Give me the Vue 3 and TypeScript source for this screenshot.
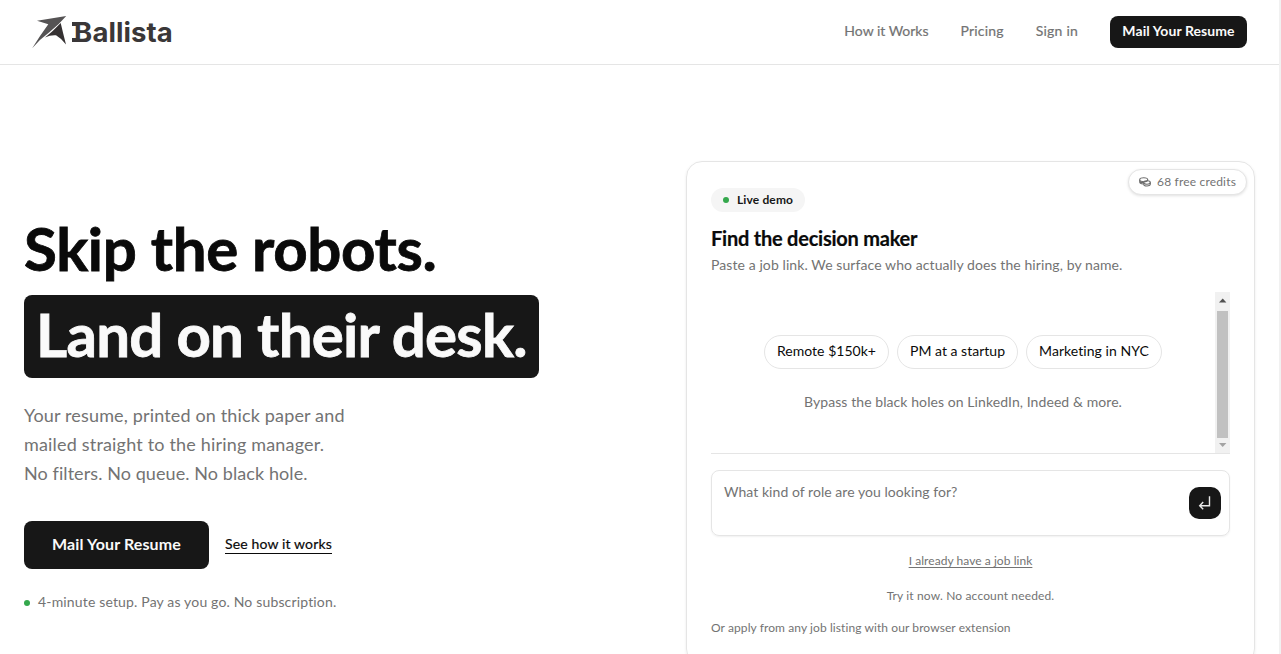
<script setup lang="ts">
const links: { label: string; cls: string }[] = [
  { label: 'How it Works', cls: 'how' },
  { label: 'Pricing', cls: 'pricing' },
  { label: 'Sign in', cls: 'signin' },
]
const chips: { label: string; cls: string }[] = [
  { label: 'Remote $150k+', cls: 'c1' },
  { label: 'PM at a startup', cls: 'c2' },
  { label: 'Marketing in NYC', cls: 'c3' },
]
</script>

<template>
  <div class="page">
    <header class="header">
      <a class="logo">
        <svg class="mark" width="36" height="34" viewBox="0 0 36 34">
          <path d="M34.2 1 5 5.800 16.300 9.200Q8 20.500 .2 33.200 7.500 24.600 17 17.600 27 9.600 34.200 1Z" fill="#555354" />
          <path d="M28.700 8Q21.500 15.800 13 22.500 18.500 19.800 24 20.300 29.500 23.500 34 29.500 31 18 28.700 8Z" fill="#353132" />
        </svg>
        <span class="wordmark"><span class="slab">B</span><span class="rest">allista</span></span>
      </a>
      <nav class="nav">
        <a v-for="l in links" :key="l.label" :class="l.cls">{{ l.label }}</a>
        <button class="cta-small">Mail Your Resume</button>
      </nav>
    </header>

    <main class="main">
      <section class="hero">
        <h1>
          <span class="line">Skip the robots.</span>
          <span class="pill">Land on their desk.</span>
        </h1>
        <p class="lead">
          <span class="l1">Your resume, printed on thick paper and</span>
          <span class="l2">mailed straight to the hiring manager.</span>
          <span class="l3">No filters. No queue. No black hole.</span>
        </p>
        <div class="actions">
          <button class="cta">Mail Your Resume</button>
          <a class="see">See how it works</a>
        </div>
        <p class="note"><i class="dot"></i><span>4-minute setup. Pay as you go. No subscription.</span></p>
      </section>

      <section class="card">
        <div class="credits">
          <svg width="12" height="10" viewBox="0 0 12 10" fill="none" stroke="#6c6c6c" stroke-width="1.100">
            <ellipse cx="4.700" cy="2.700" rx="4" ry="2" />
            <path d="M.7 2.700v2.300c0 1.100 1.700 1.900 3.500 2M8.700 2.700v1M.9 4.500c1 .9 2.700 1.100 4 1" />
            <ellipse cx="8" cy="5.500" rx="3.300" ry="1.700" />
            <path d="M4.700 5.500v1.800c0 2.300 6.600 2.300 6.600 0V5.500" />
          </svg>
          <span>68 free credits</span>
        </div>
        <div class="badge"><i class="dot"></i><span>Live demo</span></div>
        <h2>Find the decision maker</h2>
        <p class="desc">Paste a job link. We surface who actually does the hiring, by name.</p>

        <div class="scroller">
          <div class="suggest">
            <div class="chips">
              <button v-for="c in chips" :key="c.label" class="chip" :class="c.cls">{{ c.label }}</button>
            </div>
            <p class="bypass">Bypass the black holes on LinkedIn, Indeed &amp; more.</p>
          </div>
          <div class="bar">
            <svg width="15" height="19" viewBox="0 0 15 19"><path d="M4 10.500h7.400L7.700 6.500Z" fill="#505050" /></svg>
            <div class="thumb"></div>
            <svg width="15" height="15" viewBox="0 0 15 15"><path d="M4 5h7.400L7.700 9Z" fill="#a3a3a3" /></svg>
          </div>
        </div>

        <div class="prompt">
          <span class="placeholder">What kind of role are you looking for?</span>
          <button class="send" aria-label="Send">
            <svg width="16" height="16" viewBox="0 0 16 16" fill="none" stroke="#e8e8e8" stroke-width="1.400">
              <path d="M12.500 1.200V10.700H2.800M6.200 7.100 2.700 10.700l3.500 3.600" />
            </svg>
          </button>
        </div>

        <a class="joblink">I already have a job link</a>
        <p class="try">Try it now. No account needed.</p>
        <p class="ext">Or apply from any job listing with our browser extension</p>
      </section>
    </main>
  </div>
</template>

<style>
body {
  margin: 0;
  background: #fff;
}
</style>

<style scoped>
.page {
  box-sizing: border-box;
  width: 1281px;
  height: 654px;
  overflow: hidden;
  border-right: 2px solid #f1f1f1;
  font-family: Lato, 'Open Sans', sans-serif;
  font-size: 14px;
  line-height: 20px;
  color: #0a0a0a;
}
p, h1, h2 { margin: 0; }
button { font: inherit; border: 0; padding: 0; box-sizing: border-box; white-space: nowrap; }

.header {
  box-sizing: border-box;
  height: 65px;
  padding: 0 32px;
  border-bottom: 1px solid #e5e5e5;
  display: flex;
  align-items: center;
  justify-content: space-between;
}
.logo { display: flex; align-items: center; color: #3a3738; }
.mark { margin-right: 6px; }
.wordmark {
  display: flex;
  height: 32px;
  padding-top: 1px;
  box-sizing: border-box;
  line-height: 30px;
  font-family: Inter, sans-serif;
  font-size: 27.500px;
  font-weight: 700;
}
.slab { position: relative; width: 18.500px; }
/* slab serifs on the stem of the initial */
.slab::before,
.slab::after {
  content: '';
  position: absolute;
  left: -2px;
  width: 6px;
  height: 4px;
  background: #3a3738;
}
.slab::before { top: 5px; }
.slab::after { top: 21px; }
.rest { letter-spacing: 0.050px; }
.nav { display: flex; align-items: center; color: #737373; }
.nav a { margin-right: 32px; padding-bottom: 2px; -webkit-text-stroke: 0.200px #737373; white-space: nowrap; }
.how { letter-spacing: -0.010px; }
.pricing { letter-spacing: 0.190px; }
.signin { letter-spacing: 0.220px; }
.cta-small {
  width: 137px;
  height: 32px;
  padding-bottom: 2px;
  border-radius: 8px;
  background: #171717;
  color: #fafafa;
  font-weight: 700;
  letter-spacing: 0.080px;
}

.main { display: flex; justify-content: space-between; padding: 96px 24px 0; }
.hero { padding-top: 51px; }
h1 {
  display: flex;
  flex-direction: column;
  align-items: flex-start;
  gap: 11px;
  font-size: 60px;
  font-weight: 700;
  line-height: 72px;
  white-space: nowrap;
}
.line { letter-spacing: -0.350px; -webkit-text-stroke: 0.800px #0a0a0a; }
.pill {
  box-sizing: border-box;
  width: 515px;
  height: 83px;
  padding: 3px 12px 8px;
  border-radius: 8px;
  background: #171717;
  color: #fafafa;
  letter-spacing: -0.740px;
  -webkit-text-stroke: 0.800px #fafafa;
}
.lead { margin-top: 23px; font-size: 18px; line-height: 29px; color: #737373; }
.lead span { display: block; }
.lead .l1 { letter-spacing: 0.150px; }
.lead .l2 { letter-spacing: 0.180px; }
.lead .l3 { letter-spacing: 0.080px; }
.actions { display: flex; align-items: center; gap: 16px; margin-top: 33px; }
.cta {
  width: 185px;
  height: 48px;
  padding-bottom: 2px;
  border-radius: 8px;
  background: #171717;
  color: #fafafa;
  font-size: 16px;
  font-weight: 700;
  letter-spacing: 0.120px;
}
.see {
  margin-top: -1px;
  line-height: 17px;
  padding-bottom: 1px;
  border-bottom: 1px solid #0a0a0a;
  letter-spacing: 0.140px;
  -webkit-text-stroke: 0.200px #0a0a0a;
}
.note {
  display: flex;
  align-items: center;
  gap: 8px;
  margin-top: 23px;
  color: #737373;
  letter-spacing: 0.160px;
}
.dot { width: 6px; height: 6px; border-radius: 50%; background: #34a84c; }
.note .dot { margin-top: 1px; }

.card {
  position: relative;
  box-sizing: border-box;
  width: 569px;
  height: 504px;
  padding: 26px 24px 0;
  border: 1px solid #e5e5e5;
  border-radius: 16px;
  box-shadow: 0 1px 3px rgba(0, 0, 0, 0.080);
  display: flex;
  flex-direction: column;
}
.credits {
  position: absolute;
  top: 7px;
  right: 7px;
  box-sizing: border-box;
  width: 119px;
  height: 26px;
  padding-left: 10px;
  border: 1px solid #e5e5e5;
  border-radius: 13px;
  background: #fff;
  box-shadow: 0 1px 3px rgba(0, 0, 0, 0.120);
  display: flex;
  align-items: center;
  gap: 6px;
  font-size: 12px;
  letter-spacing: 0.177px;
  color: #737373;
}
.badge {
  align-self: flex-start;
  box-sizing: border-box;
  width: 94px;
  height: 24px;
  padding-left: 12px;
  border-radius: 12px;
  background: #f5f5f5;
  display: flex;
  align-items: center;
  gap: 8px;
  font-size: 12px;
  font-weight: 700;
  letter-spacing: 0.130px;
  color: #171717;
}
h2 { margin-top: 12px; font-size: 20px; line-height: 28px; letter-spacing: -0.230px; -webkit-text-stroke: 0.200px #0a0a0a; }
.desc { margin-top: 3px; color: #737373; letter-spacing: 0.090px; }
.scroller {
  box-sizing: border-box;
  height: 162px;
  margin-top: 17px;
  border-bottom: 1px solid #e5e5e5;
  display: flex;
}
.suggest { flex: 1; padding-top: 43px; display: flex; flex-direction: column; align-items: center; }
.chips { display: flex; gap: 8px; }
.chip {
  height: 34px;
  padding-bottom: 2px;
  border: 1px solid #e5e5e5;
  border-radius: 17px;
  background: #fff;
  color: #0a0a0a;
}
.c1 { width: 125px; letter-spacing: 0.023px; }
.c2 { width: 121px; letter-spacing: 0.013px; }
.c3 { width: 136px; letter-spacing: 0.050px; }
.bypass { margin-top: 23px; color: #737373; letter-spacing: 0.078px; }
.bar { width: 15px; background: #f1f1f1; display: flex; flex-direction: column; }
.bar svg { flex: none; }
.thumb { flex: 1; margin: 0 2px; background: #c1c1c1; }
.prompt {
  box-sizing: border-box;
  height: 66px;
  margin-top: 16px;
  padding: 11px 8px 0 12px;
  border: 1px solid #e5e5e5;
  border-radius: 8px;
  box-shadow: 0 1px 2px rgba(0, 0, 0, 0.060);
  display: flex;
  justify-content: space-between;
  align-items: flex-start;
}
.placeholder { color: #737373; letter-spacing: 0.050px; }
.send {
  width: 32px;
  height: 32px;
  margin-top: 5px;
  border-radius: 10px;
  background: #171717;
  display: flex;
  align-items: center;
  justify-content: center;
}
.joblink {
  align-self: center;
  margin-top: 15px;
  font-size: 12px;
  letter-spacing: 0.056px;
  color: #737373;
  text-decoration: underline;
  text-underline-offset: 2px;
}
.try { align-self: center; margin-top: 15px; font-size: 12px; letter-spacing: 0.145px; color: #737373; }
.ext { margin-top: 12px; font-size: 12px; letter-spacing: 0.090px; color: #737373; }
</style>
